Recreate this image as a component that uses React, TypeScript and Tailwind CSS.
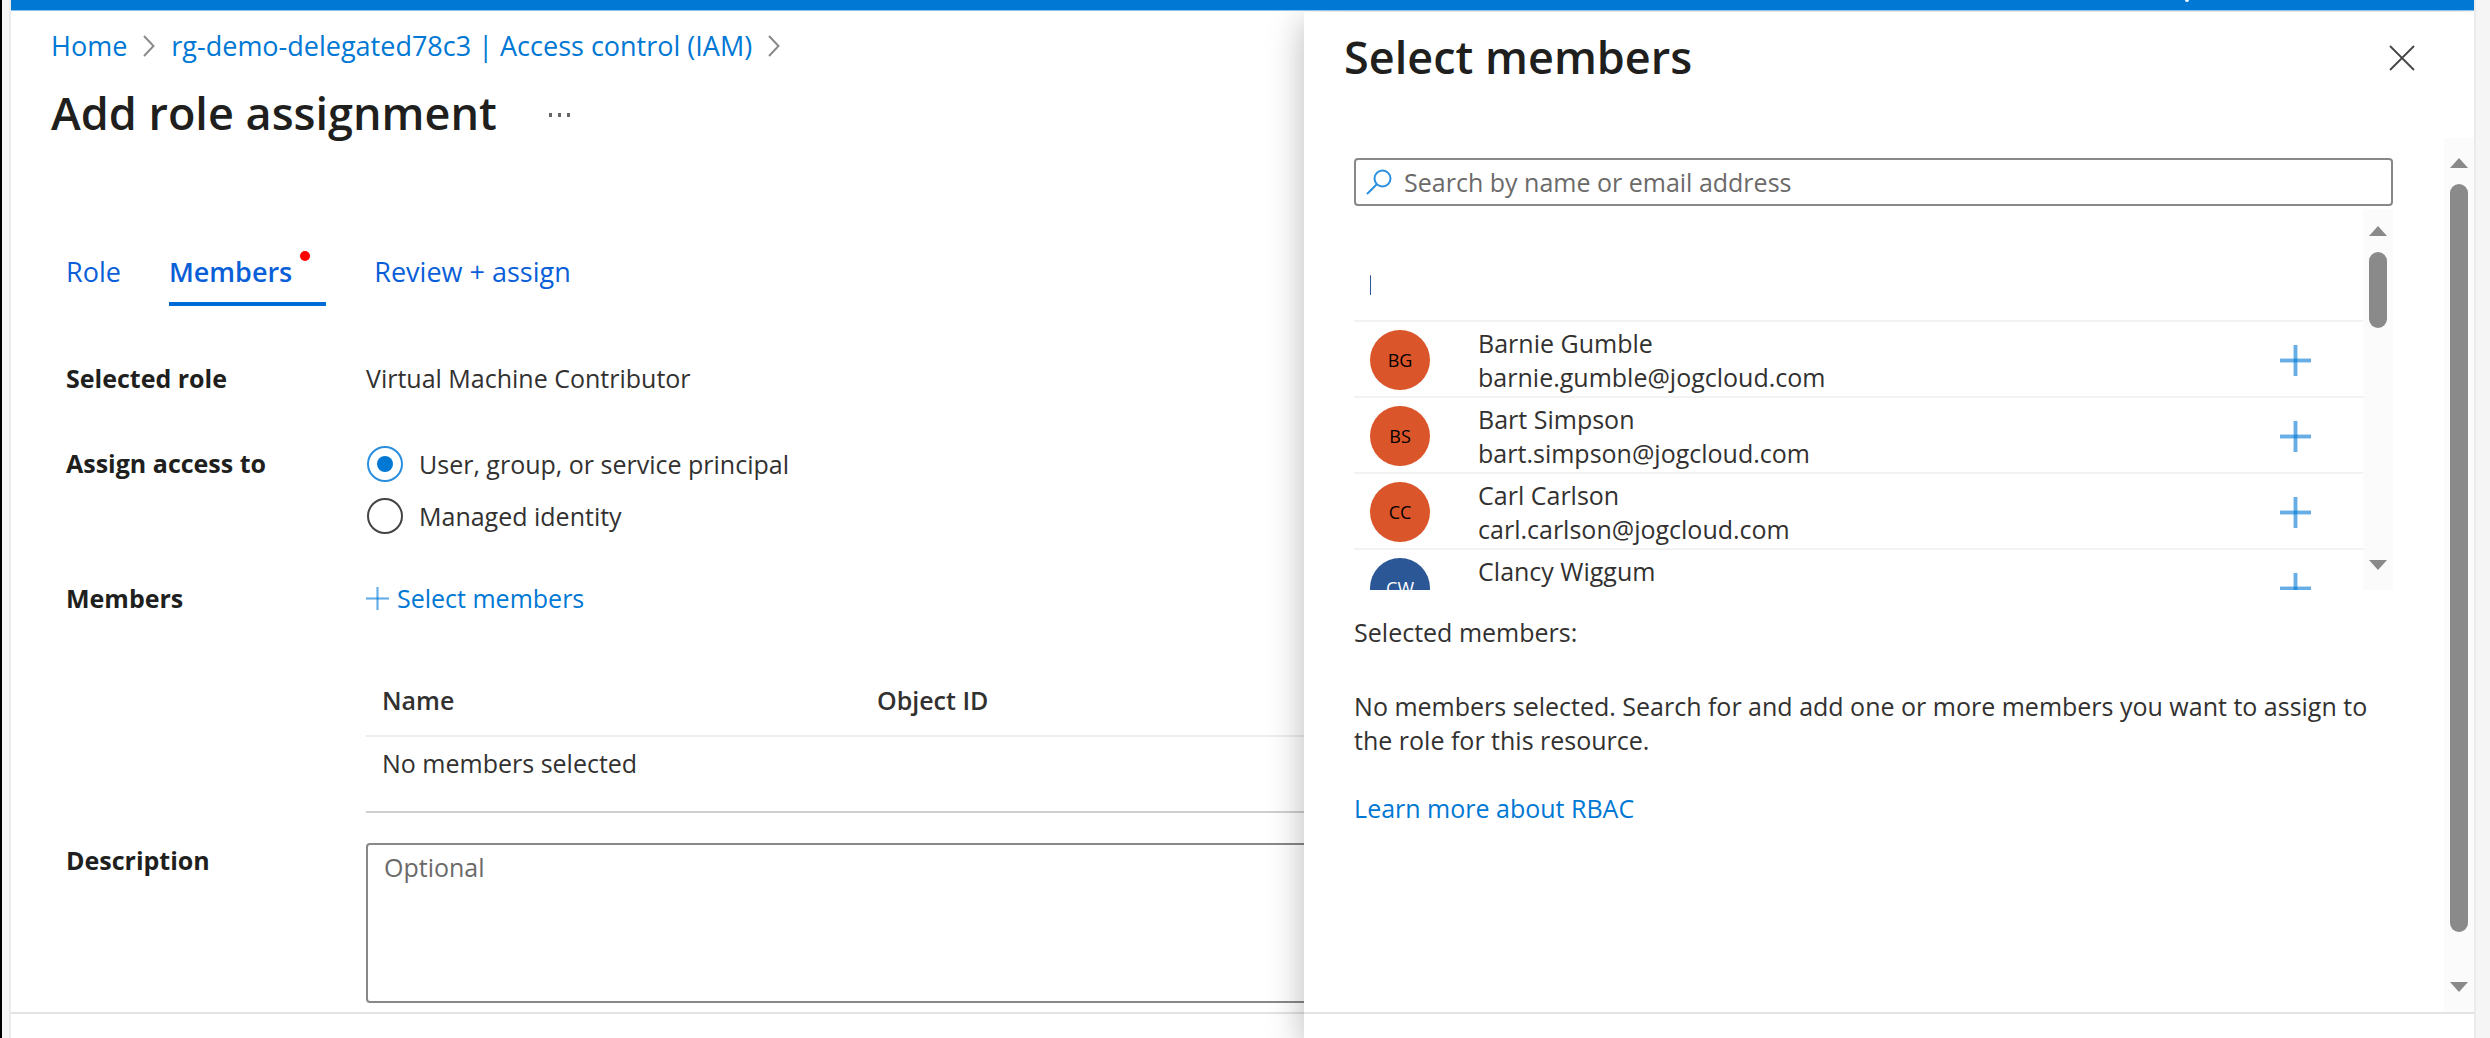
import { useState } from "react";

type Person = { initials: string; name: string; email?: string; avatar: string };

const people: Person[] = [
  { initials: "BG", name: "Barnie Gumble", email: "barnie.gumble@jogcloud.com", avatar: "bg-[#da552a] text-black" },
  { initials: "BS", name: "Bart Simpson", email: "bart.simpson@jogcloud.com", avatar: "bg-[#da552a] text-black" },
  { initials: "CC", name: "Carl Carlson", email: "carl.carlson@jogcloud.com", avatar: "bg-[#da552a] text-black" },
  { initials: "CW", name: "Clancy Wiggum", avatar: "bg-[#2b5797] text-white" },
];

function Crumb() {
  return (
    <svg width="12" height="22" viewBox="0 0 12 22" fill="none" stroke="#8a8a8a" strokeWidth="2" aria-hidden="true">
      <path d="M1 1l9.500 10L1 21" />
    </svg>
  );
}

function Arrow({ down = false }: { down?: boolean }) {
  return (
    <svg width="18" height="10" viewBox="0 0 18 10" fill="#8a8a8a" aria-hidden="true">
      <path d={down ? "M0 0h18L9 10z" : "M0 10h18L9 0z"} />
    </svg>
  );
}

function Plus({ size, stroke }: { size: number; stroke: number }) {
  return (
    <svg width={size} height={size} viewBox="0 0 32 32" stroke="#0078d4" strokeOpacity="0.6" strokeWidth={stroke} aria-hidden="true">
      <path d="M16 0v32" />
      <path d="M0 16h32" />
    </svg>
  );
}

function Radio({ id, label, checked, onChange }: { id: string; label: string; checked: boolean; onChange: () => void }) {
  return (
    <div className="flex items-center gap-4">
      <span className="grid size-9 place-items-center">
        <input
          id={id}
          type="radio"
          name="access"
          checked={checked}
          onChange={onChange}
          className="peer col-start-1 row-start-1 size-9 appearance-none rounded-full border-2 border-[#444] checked:border-[#2b8fe0]"
        />
        <span className="pointer-events-none col-start-1 row-start-1 size-4 rounded-full peer-checked:bg-[#0078d4]" />
      </span>
      <label htmlFor={id}>{label}</label>
    </div>
  );
}

export default function App() {
  const [access, setAccess] = useState("user");
  return (
    <div className="flex min-h-screen border-l-2 border-black bg-[#f5f5f5] font-['Open_Sans',sans-serif] text-[25px] leading-[34px] text-[#323130]">
      <div className="relative ml-[7px] mr-[14px] flex flex-1 flex-col overflow-hidden border-x-2 border-[#ebebeb] bg-white">
        <header className="relative z-10 flex h-[11px] shrink-0 justify-end border-b border-[#8cc3ee] bg-[#0078d4] pr-[285px]">
          <span className="h-[2px] w-[4px] rounded-b-full bg-white" />
        </header>

        <main className="flex flex-1 flex-col pb-[9px] pl-10">
          <nav aria-label="Breadcrumb" className="flex items-center gap-4 pt-[18px] text-[27px] text-[#0078d4]">
            <a href="#home">Home</a>
            <Crumb />
            <a href="#iam">rg-demo-delegated78c3 | Access control (IAM)</a>
            <Crumb />
          </nav>

          <div className="mt-5 flex items-center gap-[52px]">
            <h1 className="text-[45px] leading-[60px] font-semibold text-[#201f1e]">Add role assignment</h1>
            <button type="button" aria-label="More actions" className="flex gap-[6px] pt-1">
              <span className="h-1 w-[3px] bg-[#666]" />
              <span className="h-1 w-[3px] bg-[#666]" />
              <span className="h-1 w-[3px] bg-[#666]" />
            </button>
          </div>

          <div className="pl-[15px]">
            <div role="tablist" className="mt-28 flex items-start gap-12 text-[27px] text-[#0a5fd8]">
              <button type="button" role="tab" aria-selected="false">Role</button>
              <button type="button" role="tab" aria-selected="true" className="relative border-b-4 border-[#006bd6] pr-[34px] pb-[13px] font-semibold">
                Members
                <span className="absolute top-[-4px] right-4 size-[10px] rounded-full bg-[#f00]" />
              </button>
              <button type="button" role="tab" aria-selected="false">Review + assign</button>
            </div>

            <div className="mt-[55px] grid grid-cols-[300px_1fr]">
              <span className="font-bold text-[#201f1e]">Selected role</span>
              <span>Virtual Machine Contributor</span>
            </div>

            <div role="radiogroup" aria-labelledby="access-label" className="mt-[51px] grid grid-cols-[300px_1fr]">
              <span id="access-label" className="font-bold text-[#201f1e]">Assign access to</span>
              <div className="flex flex-col gap-4 pl-px">
                <Radio id="user" label="User, group, or service principal" checked={access === "user"} onChange={() => setAccess("user")} />
                <Radio id="managed" label="Managed identity" checked={access === "managed"} onChange={() => setAccess("managed")} />
              </div>
            </div>

            <div className="mt-[47px] grid grid-cols-[300px_1fr]">
              <span className="font-bold text-[#201f1e]">Members</span>
              <div>
                <button type="button" className="flex items-center gap-2 text-[#0078d4]">
                  <Plus size={23} stroke={3} />
                  Select members
                </button>
                <table className="mt-[49px] w-full table-fixed text-left">
                  <thead>
                    <tr className="h-[72px] border-b-2 border-[#ededed]">
                      <th className="w-[495px] pl-4 font-semibold">Name</th>
                      <th className="pl-4 font-semibold">Object ID</th>
                    </tr>
                  </thead>
                  <tbody>
                    <tr className="h-[76px] border-b-2 border-[#cfcfcf]">
                      <td colSpan={2} className="pt-[9px] pl-4 align-top">No members selected</td>
                    </tr>
                  </tbody>
                </table>
              </div>
            </div>

            <div className="mt-[30px] grid grid-cols-[300px_1fr]">
              <label htmlFor="description" className="font-bold text-[#201f1e]">Description</label>
              <textarea
                id="description"
                placeholder="Optional"
                className="h-40 resize-none rounded-[4px] border-2 border-[#8a8886] px-4 py-[5px] placeholder:text-[#6b6a69]"
              />
            </div>
          </div>
        </main>
        <footer className="h-[27px] shrink-0 border-t-2 border-[#e3e3e3]" />

        <aside
          role="dialog"
          aria-labelledby="panel-title"
          className="absolute top-[12px] right-0 bottom-0 flex w-[47.5%] flex-col bg-white shadow-[0_8px_34px_rgba(0,0,0,0.28)]"
        >
          <div className="flex items-center justify-between pt-[15px] pr-[59px] pl-10">
            <h2 id="panel-title" className="text-[45px] leading-[60px] font-semibold text-[#201f1e]">Select members</h2>
            <button type="button" aria-label="Close" className="pt-[2px]">
              <svg width="26" height="26" viewBox="0 0 26 26" stroke="#444" strokeWidth="1.8" aria-hidden="true">
                <path d="M1 1l24 24M25 1L1 25" />
              </svg>
            </button>
          </div>

          <div className="mt-[51px] flex flex-1">
            <div className="flex-1 pt-5 pr-[51px] pl-[50px]">
              <div className="flex h-12 items-center gap-3 rounded-[4px] border-2 border-[#8a8886] pl-[10px]">
                <svg width="26" height="26" viewBox="0 0 26 26" fill="none" stroke="#2b8fe0" strokeWidth="2" aria-hidden="true">
                  <circle cx="16.500" cy="9.500" r="8" />
                  <path d="M10.800 15.200L1 25" />
                </svg>
                <input
                  type="text"
                  aria-label="Search by name or email address"
                  placeholder="Search by name or email address"
                  className="min-w-0 flex-1 outline-none placeholder:text-[#6b6a69]"
                />
              </div>

              <div className="mt-[3px] flex h-[381px]">
                <ul className="flex-1 overflow-hidden">
                  <li className="flex h-[113px] items-center border-b-2 border-[#f2f2f2] pt-10 pl-4">
                    <span className="h-5 w-px rounded-full bg-[#2b5797]" />
                  </li>
                  {people.map((p) => (
                    <li key={p.initials} className="flex h-[76px] items-start border-b-2 border-[#f2f2f2] pt-2 pr-[52px] pl-4">
                      <span className={`grid size-[60px] shrink-0 place-items-center rounded-full text-[18px] ${p.avatar}`}>{p.initials}</span>
                      <span className="ml-12 flex flex-1 flex-col self-start -mt-1">
                        <span>{p.name}</span>
                        {p.email && <span>{p.email}</span>}
                      </span>
                      <button type="button" aria-label={`Add ${p.name}`} className="flex h-[60px] items-center">
                        <Plus size={31} stroke={4} />
                      </button>
                    </li>
                  ))}
                </ul>
                <div className="flex w-[30px] flex-col items-center bg-[#fbfbfb] pt-[17px] pb-5">
                  <Arrow />
                  <span className="mt-4 h-[76px] w-[18px] rounded-full bg-[#8a8a8a]" />
                  <span className="flex-1" />
                  <Arrow down />
                </div>
              </div>

              <p className="mt-[25px]">Selected members:</p>
              <p className="mt-10">
                No members selected. Search for and add one or more members you want to assign to the role for this resource.
              </p>
              <a href="#rbac" className="mt-[34px] block text-[#0078d4]">Learn more about RBAC</a>
            </div>

            <div className="flex w-[30px] flex-col items-center bg-[#fbfbfb] pt-5 pb-5">
              <Arrow />
              <span className="mt-4 mb-[50px] w-[18px] flex-1 rounded-full bg-[#8a8a8a]" />
              <Arrow down />
            </div>
          </div>
          <div className="h-[27px] shrink-0 border-t-2 border-[#e3e3e3]" />
        </aside>
      </div>
    </div>
  );
}
